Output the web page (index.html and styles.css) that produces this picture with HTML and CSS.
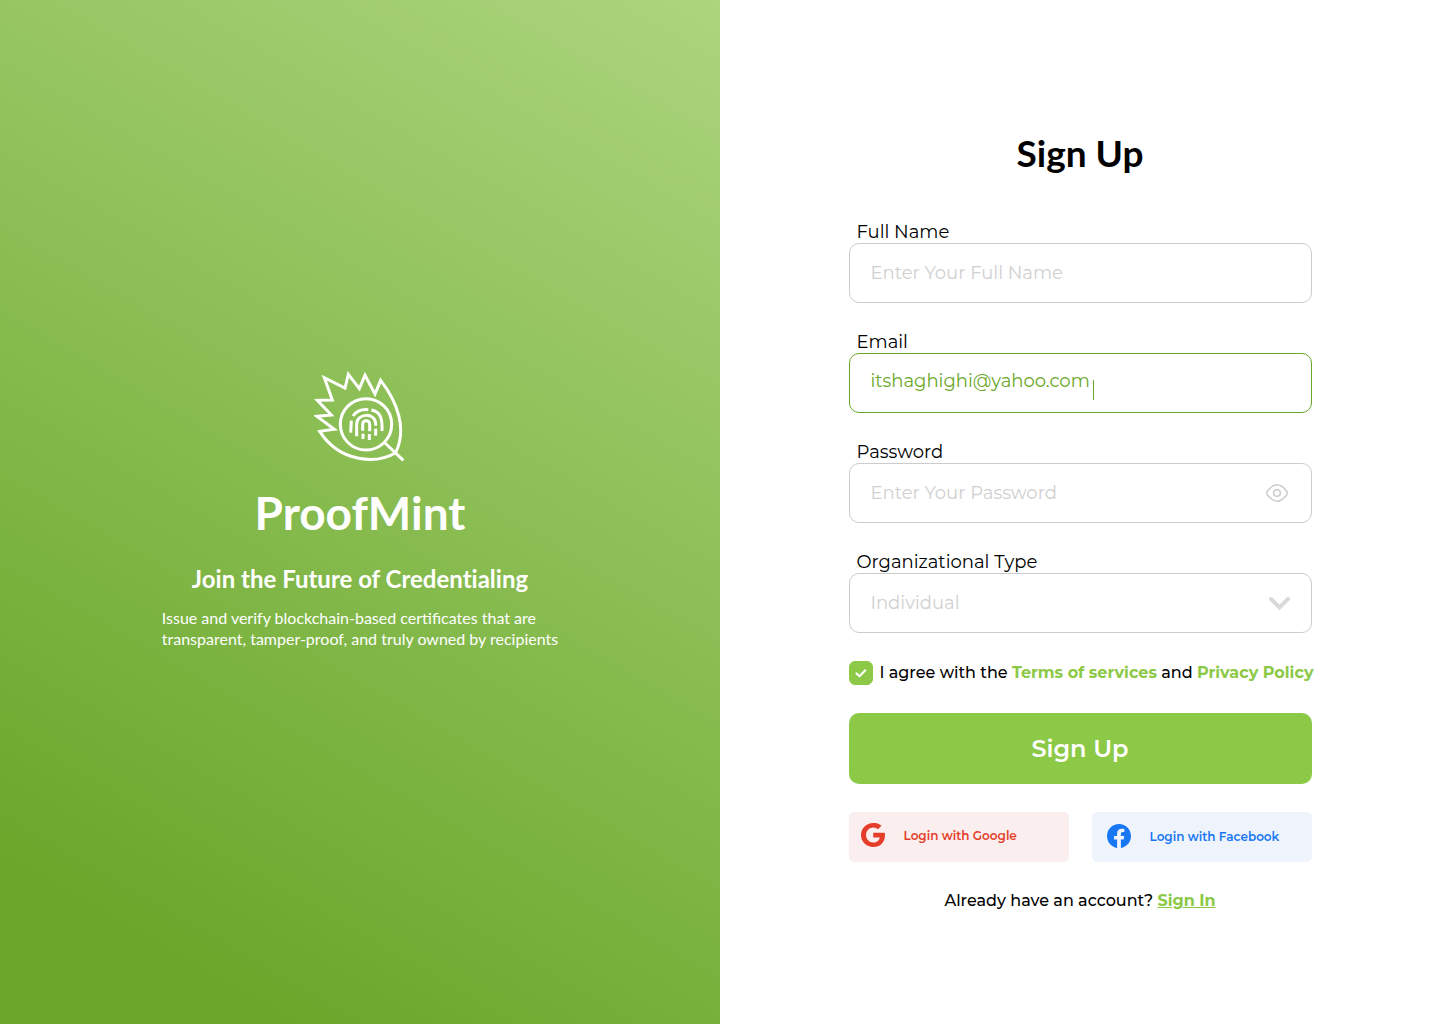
FILE: index.html
```html
<!DOCTYPE html>
<html lang="en">
<head>
<meta charset="utf-8">
<meta name="viewport" content="width=device-width, initial-scale=1">
<title>Sign Up - ProofMint</title>
<link rel="stylesheet" href="styles.css">
</head>
<body>
<div class="page">
  <section class="hero">
    <svg class="logo" viewBox="40 30 276 276" fill="none" stroke="currentColor" stroke-width="9" aria-hidden="true">
      <path d="M285 275C230 308 120 308 57 211L101 205L49 166L92 162L50 118L95 117L71 50L133 81L143 40L176 83L193 43L223 99L240 58C290 123 320 203 285 275Z"/>
      <circle cx="196" cy="190" r="77"/>
      <path d="M250 243L308 298"/>
      <g stroke-width="9">
        <path d="M152 179L150 215"/>
        <path d="M157 165C168 149 184 144 203 146"/>
        <path d="M212 147C236 151 246 167 244 210"/>
        <path d="M168 226V189C169 156 224 153 225 189V194"/>
        <path d="M225 203V224"/>
        <path d="M186 209V189C187 176 206 176 207 189V211"/>
        <path d="M187 218V234"/>
        <path d="M206 219V237"/>
      </g>
    </svg>
    <p class="brand">ProofMint</p>
    <h2 class="tagline">Join the Future of Credentialing</h2>
    <p class="blurb">Issue and verify blockchain-based certificates that are<br>transparent, tamper-proof, and truly owned by recipients</p>
  </section>

  <main class="panel">
    <form class="form">
      <h1 class="title">Sign Up</h1>

      <div class="field">
        <label class="label" for="name">Full Name</label>
        <div class="box"><input class="input" id="name" type="text" placeholder="Enter Your Full Name"></div>
      </div>

      <div class="field">
        <label class="label" for="email">Email</label>
        <div class="box box-active">
          <input class="input input-fit" id="email" type="email" value="itshaghighi@yahoo.com">
          <span class="caret"></span>
        </div>
      </div>

      <div class="field">
        <label class="label" for="password">Password</label>
        <div class="box">
          <input class="input" id="password" type="password" placeholder="Enter Your Password">
          <button class="reveal" type="button" aria-label="Show password">
            <svg width="24" height="24" viewBox="0 0 24 24" fill="none" stroke="currentColor" stroke-width="1.5">
              <path d="M2.600 9.800C5 6.800 8.300 3.800 12 3.800S19 6.800 21.400 9.800C22.500 11.300 22.500 12.700 21.400 14.200C19 17.200 15.700 20.200 12 20.200S5 17.200 2.600 14.200C1.500 12.700 1.500 11.300 2.600 9.800Z"/>
              <circle cx="12" cy="12" r="3.300"/>
            </svg>
          </button>
        </div>
      </div>

      <div class="field">
        <label class="label" for="type">Organizational Type</label>
        <div class="box box-select">
          <select class="input" id="type"><option>Individual</option><option>Organization</option></select>
          <svg class="chevron" width="24" height="24" viewBox="0 0 24 24" fill="none" stroke="currentColor" stroke-width="4" stroke-linecap="round" aria-hidden="true"><path d="M4 8L12.500 16.500L21 8"/></svg>
        </div>
      </div>

      <div class="agree">
        <span class="check-wrap">
          <input class="check" id="agree" type="checkbox" checked>
          <svg class="tick" width="24" height="24" viewBox="0 0 24 24" fill="none" stroke="currentColor" stroke-width="2.200" stroke-linecap="round" stroke-linejoin="round" aria-hidden="true"><path d="M7.500 12.500L10.500 15.300L16.300 9.300"/></svg>
        </span>
        <label for="agree">I agree with the <a class="link" href="#terms">Terms of services</a> and <a class="link" href="#privacy">Privacy Policy</a></label>
      </div>

      <button class="submit" type="submit">Sign Up</button>

      <div class="social">
        <button class="social-btn google" type="button">
          <svg width="24" height="24" viewBox="0 0 24 24" fill="currentColor" aria-hidden="true"><path d="M12.240 9.818V14.464H18.840C18.540 16.178 16.836 19.490 12.240 19.490C8.274 19.490 5.038 16.206 5.038 12S8.274 4.510 12.240 4.510C14.497 4.510 16.007 5.473 16.870 6.302L20.546 2.761C18.186 .554 15.128 0 12.240 0C5.480 0 0 5.370 0 12S5.480 24 12.240 24C19.306 24 24 19.090 24 12.173C24 11.264 23.910 10.500 23.780 9.818Z"/></svg>
          Login with Google
        </button>
        <button class="social-btn facebook" type="button">
          <svg width="24" height="24" viewBox="0 0 24 24" fill="currentColor" aria-hidden="true"><path d="M24 12.073C24 5.405 18.627 0 12 0S0 5.405 0 12.073C0 18.099 4.388 23.094 10.125 24V15.563H7.078V12.073H10.125V9.413C10.125 6.387 11.917 4.716 14.658 4.716C15.970 4.716 17.344 4.951 17.344 4.951V7.923H15.831C14.340 7.923 13.875 8.853 13.875 9.808V12.073H17.203L16.671 15.563H13.875V24C19.612 23.094 24 18.099 24 12.073Z"/></svg>
          Login with Facebook
        </button>
      </div>

      <p class="signin">Already have an account? <a class="link link-underlined" href="#signin">Sign In</a></p>
    </form>
  </main>
</div>
</body>
</html>
```
FILE: styles.css
```css
* { box-sizing: border-box; }

body {
  margin: 0;
  font-family: Montserrat, Inter, "Liberation Sans", sans-serif;
  color: #000;
  background: #fff;
}

button, input, select { font: inherit; }
button { border: 0; cursor: pointer; }

.page {
  display: grid;
  grid-template-columns: 1fr 1fr;
  min-height: 100vh;
}

.hero {
  display: flex;
  flex-direction: column;
  align-items: center;
  justify-content: center;
  padding-bottom: 4px;
  color: #fff;
  font-family: Lato, "Open Sans", sans-serif;
  background: linear-gradient(30deg, #6aa72a 11%, #acd57e);
}

.logo { width: 92px; height: 92px; }

.brand {
  margin: 20px 0 0;
  font-size: 46px;
  line-height: 60px;
  font-weight: 700;
}

.tagline {
  margin: 20px 0 12px;
  font-size: 24px;
  line-height: 32px;
  font-weight: 700;
  font-variant-ligatures: none;
}

.blurb {
  margin: 0;
  font-size: 16px;
  line-height: 21px;
}

.panel {
  display: flex;
  align-items: center;
  justify-content: center;
  padding-top: 18px;
}

.form {
  display: flex;
  flex-direction: column;
  width: 463px;
}

.title {
  margin: 0 0 44px;
  font-family: Lato, "Open Sans", sans-serif;
  font-size: 37px;
  line-height: 48px;
  font-weight: 700;
  text-align: center;
}

.field { margin-bottom: 28px; }

.label {
  display: block;
  padding-left: 8px;
  font-size: 18px;
  line-height: 22px;
}

.box {
  display: flex;
  align-items: center;
  height: 60px;
  padding: 0 20px;
  border: 1px solid #ccc;
  border-radius: 10px;
}

.input {
  flex: 1;
  min-width: 0;
  height: 24px;
  padding: 0 1px;
  border: 0;
  outline: 0;
  background: none;
  color: inherit;
  font-size: 18px;
  line-height: 24px;
}

.input::placeholder { color: #d0d0d0; opacity: 1; }

.box-active {
  align-items: flex-start;
  padding-top: 15px;
  border-color: #6aa72a;
  color: #6aa72a;
}

.input-fit { flex: none; field-sizing: content; }

.caret {
  width: 1px;
  height: 20px;
  margin: 11px 2px 0;
  background: currentColor;
}

.reveal {
  display: flex;
  margin-right: 2px;
  padding: 0;
  background: none;
  color: #ccc;
}

.box-select { color: #d0d0d0; }
.box-select .input { appearance: none; }
.chevron { color: #d9d9d9; }

.agree {
  display: flex;
  align-items: center;
  gap: 7px;
  margin-bottom: 28px;
  font-size: 16px;
  line-height: 24px;
  font-weight: 500;
  white-space: nowrap;
}

.check-wrap { display: grid; flex: none; }
.check-wrap > * { grid-area: 1 / 1; }

.check {
  appearance: none;
  width: 24px;
  height: 24px;
  margin: 0;
  border: 1px solid #8cc946;
  border-radius: 6px;
}

.check:checked { background: #8cc946; }

.tick { color: #fff; pointer-events: none; }

.link { color: #8cc946; font-weight: 700; text-decoration: none; }
.link-underlined { text-decoration: underline; }

.submit {
  height: 71px;
  margin-bottom: 28px;
  border-radius: 10px;
  background: #8cc946;
  color: #fff;
  font-size: 24px;
  font-weight: 600;
}

.social {
  display: grid;
  grid-template-columns: 1fr 1fr;
  gap: 23px;
}

.social-btn {
  display: flex;
  align-items: center;
  height: 50px;
  border-radius: 5px;
  font-size: 12px;
  font-weight: 600;
}

.google { gap: 19px; padding: 0 12px 4px; background: #faeeee; color: #e43e2b; }
.facebook { gap: 19px; padding: 0 15px 2px; background: #eff4fc; color: #1877f2; }

.signin {
  margin: 27px 0 0;
  font-size: 16px;
  line-height: 24px;
  font-weight: 500;
  text-align: center;
}
```
